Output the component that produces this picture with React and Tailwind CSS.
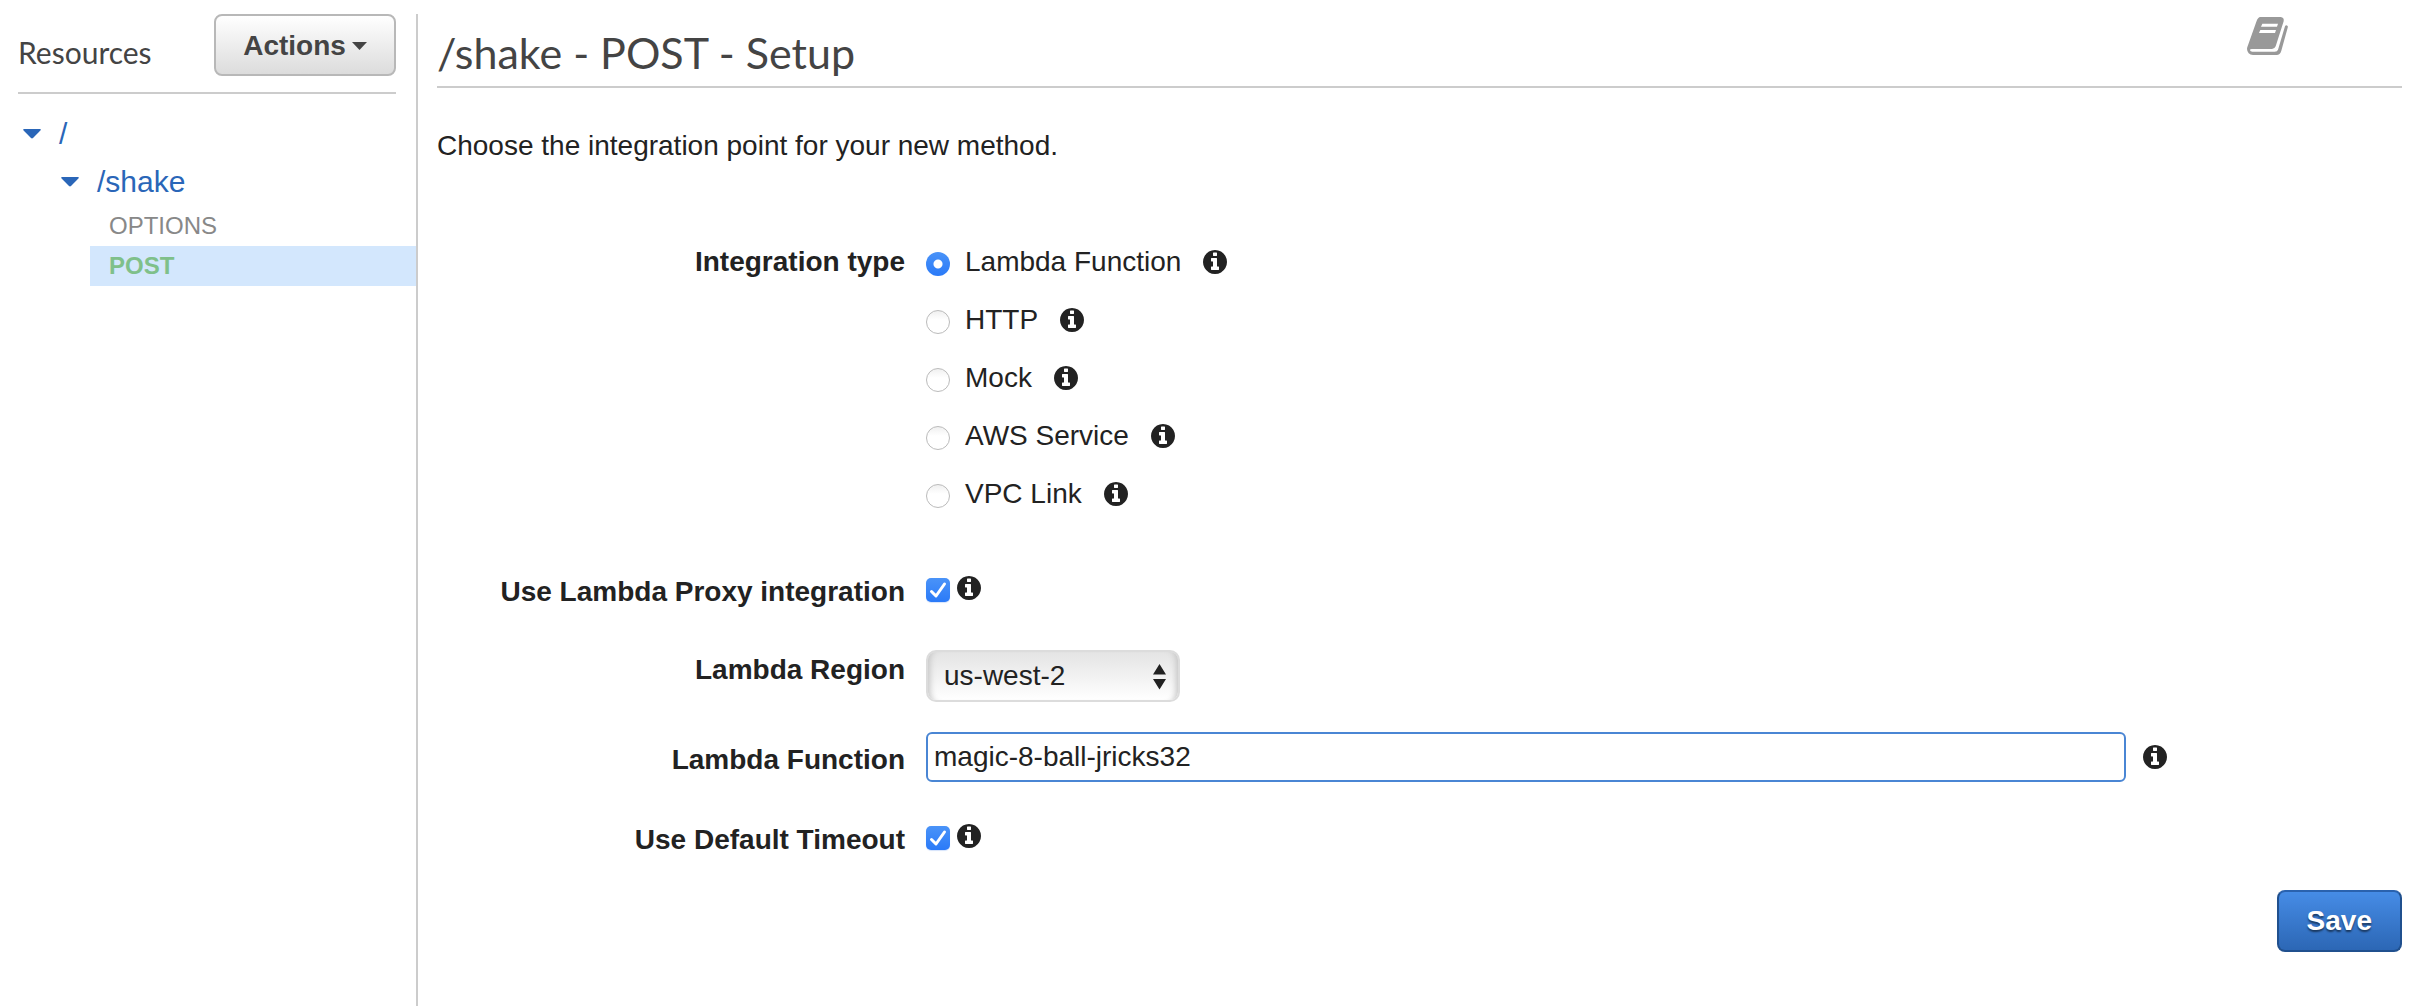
import { useState } from "react";

const INFO_PATH =
  "M1152 1376v-160q0-14-9-23t-23-9h-96v-512q0-14-9-23t-23-9h-320q-14 0-23 9t-9 23v160q0 14 9 23t23 9h96v320h-96q-14 0-23 9t-9 23v160q0 14 9 23t23 9h448q14 0 23-9t9-23zm-128-896v-160q0-14-9-23t-23-9h-192q-14 0-23 9t-9 23v160q0 14 9 23t23 9h192q14 0 23-9t9-23zm640 416q0 209-103 385.5t-279.5 279.5-385.5 103-385.5-103-279.5-279.5-103-385.5 103-385.5 279.5-279.5 385.5-103 385.5 103 279.5 279.5 103 385.5z";

const INTEGRATION_TYPES = ["Lambda Function", "HTTP", "Mock", "AWS Service", "VPC Link"];

function InfoButton({ about }) {
  return (
    <button type="button" aria-label={`About ${about}`} className="shrink-0 text-[#222]">
      <svg viewBox="128 128 1536 1536" className="block size-6" fill="currentColor" aria-hidden="true">
        <path d={INFO_PATH} />
      </svg>
    </button>
  );
}

function Caret() {
  return (
    <svg viewBox="0 0 18 10" className="h-2.5 w-[18px] shrink-0" fill="currentColor" aria-hidden="true">
      <path d="M1 0h16q1.400 .5 .4 1.600L10 9q-1 .9-2 0L.6 1.600Q-.4 .5 1 0z" />
    </svg>
  );
}

function BookIcon() {
  return (
    <svg viewBox="138 48 129 120" className="block h-10 w-[43px]" aria-hidden="true">
      <path
        fill="#999"
        d="M181 51h61q11 1 9 13l-24 75q-3 8-11 8h-60q-7 0-6 4 1 4 7 4h67q8 0 10-6l21-70q3-6 8-1 1 2 0 5l-19 69q-4 13-14 13h-71q-17-1-18-18 0-5 3-11l25-71q5-14 12-14z"
      />
      <path fill="#fff" d="M187 71h47l-3 9h-48zM181 90h47l-3 9h-48z" />
    </svg>
  );
}

function CheckBox({ id, checked, onChange }) {
  return (
    <span className="relative size-6 shrink-0">
      <input
        id={id}
        type="checkbox"
        checked={checked}
        onChange={onChange}
        className="peer block size-6 appearance-none rounded-[5px] border border-[#bbb] bg-white shadow-[0_1px_1px_#d5e3fb] checked:border-0 checked:bg-linear-to-b checked:from-[#4a93f8] checked:to-[#2a7af8]"
      />
      <svg
        viewBox="0 0 24 24"
        className="pointer-events-none absolute inset-0 hidden size-6 peer-checked:block"
        fill="none"
        stroke="#fff"
        strokeWidth="3"
        strokeLinecap="round"
        strokeLinejoin="round"
        aria-hidden="true"
      >
        <path d="M5.500 13.500l4.500 4.500L18.500 6" />
      </svg>
    </span>
  );
}

function Sidebar() {
  return (
    <aside className="mt-3.5 w-[418px] shrink-0 border-r-2 border-[#ccc]">
      <div className="mr-5 ml-[18px] flex items-start justify-between border-b-2 border-[#ccc] pb-4">
        <h2 className="mt-5 font-['Lato',sans-serif] text-[30px] leading-9 text-[#444]">Resources</h2>
        <button
          type="button"
          className="flex h-[62px] w-[182px] items-center justify-center gap-1.5 rounded-lg border-2 border-[#b8b8b8] bg-linear-to-b from-white to-[#dcdcdc] pt-0.5 font-bold text-[#444]"
        >
          Actions
          <svg viewBox="0 0 15 8" className="h-2 w-[15px]" fill="currentColor" aria-hidden="true">
            <path d="M0 0h15L7.500 8z" />
          </svg>
        </button>
      </div>
      <ul className="mt-6 text-[30px] leading-8 text-[#2a66b8]">
        <li>
          <a href="#root" className="ml-[23px] flex items-center gap-[18px]">
            <Caret />/
          </a>
          <ul className="mt-4">
            <li>
              <a href="#shake" className="ml-[61px] flex items-center gap-[18px]">
                <Caret />
                /shake
              </a>
              <ul className="mt-2 ml-[90px] text-2xl leading-10">
                <li>
                  <a href="#options" className="block pl-[19px] leading-10 text-[#888]">OPTIONS</a>
                </li>
                <li>
                  <a href="#post" className="block bg-[#d3e7fd] pl-[19px] leading-10 font-bold text-[#7fc08a]">POST</a>
                </li>
              </ul>
            </li>
          </ul>
        </li>
      </ul>
    </aside>
  );
}

export default function App() {
  const [type, setType] = useState("Lambda Function");
  const [proxy, setProxy] = useState(true);
  const [timeout, setTimeoutDefault] = useState(true);
  const [name, setName] = useState("magic-8-ball-jricks32");

  return (
    <div className="flex min-h-screen bg-white font-['Liberation_Sans',Arial,sans-serif] text-[28px] leading-8 text-[#222]">
      <Sidebar />
      <main className="mr-5 ml-[19px] min-w-0 flex-1 pt-3.5">
        <header className="flex items-start justify-between border-b-2 border-[#ccc] pb-[7px]">
          <h1 className="mt-[13px] font-['Lato',sans-serif] text-[43px] leading-[52px] text-[#444]">/shake - POST - Setup</h1>
          <button type="button" aria-label="Documentation" className="mt-0.5 mr-[113px]">
            <BookIcon />
          </button>
        </header>
        <p className="mt-[42px]">Choose the integration point for your new method.</p>

        <form onSubmit={(e) => e.preventDefault()} className="mt-[84px]">
          <div className="grid grid-cols-[468px_minmax(0,1fr)] gap-x-[21px]">
            <span id="type-label" className="text-right font-bold">Integration type</span>
            <div role="radiogroup" aria-labelledby="type-label" className="flex flex-col gap-[26px]">
              {INTEGRATION_TYPES.map((t) => (
                <div key={t} className="flex items-center">
                  <label className="mr-[22px] flex items-center gap-[15px]">
                    <input
                      type="radio"
                      name="integration-type"
                      checked={type === t}
                      onChange={() => setType(t)}
                      className="mt-1 size-6 shrink-0 appearance-none rounded-full border border-[#bbb] bg-linear-to-b from-[#f0f0f0] to-white to-40% checked:border-0 checked:bg-[radial-gradient(circle,#fff_4px,transparent_5px),linear-gradient(#4a93f8,#2a7af8)]"
                    />
                    {t}
                  </label>
                  <InfoButton about={t} />
                </div>
              ))}
            </div>

            <label htmlFor="proxy" className="mt-[66px] text-right font-bold">Use Lambda Proxy integration</label>
            <div className="mt-[66px] flex h-8 items-start gap-[7px]">
              <div className="pt-0.5">
                <CheckBox id="proxy" checked={proxy} onChange={() => setProxy(!proxy)} />
              </div>
              <InfoButton about="Lambda proxy integration" />
            </div>

            <label htmlFor="region" className="mt-[46px] text-right font-bold">Lambda Region</label>
            <div className="relative mt-[42px] w-[254px]">
              <select
                id="region"
                defaultValue="us-west-2"
                className="block h-[52px] w-full appearance-none rounded-[10px] border-2 border-[#dcdcdc] bg-linear-to-b from-[#e4e4e4] to-white pl-4 shadow-[inset_8px_0_6px_-6px_#c4c4c4,inset_-8px_0_6px_-6px_#c4c4c4]"
              >
                <option>us-west-2</option>
                <option>us-west-1</option>
                <option>us-east-1</option>
              </select>
              <svg
                viewBox="0 0 13 26"
                className="pointer-events-none absolute top-3.5 right-3.5 h-[26px] w-[13px]"
                fill="#222"
                aria-hidden="true"
              >
                <path d="M6.500 0L13 10.500H0zM0 15h13L6.500 25.500z" />
              </svg>
            </div>

            <label htmlFor="function" className="mt-[42px] text-right font-bold">Lambda Function</label>
            <div className="mt-[30px] flex items-center gap-[17px] pr-[235px]">
              <input
                id="function"
                type="text"
                value={name}
                onChange={(e) => setName(e.target.value)}
                className="h-[50px] min-w-0 flex-1 rounded-md border-2 border-[#4a86d4] bg-white px-1.5 outline-none"
              />
              <InfoButton about="the Lambda function" />
            </div>

            <label htmlFor="timeout" className="mt-[42px] text-right font-bold">Use Default Timeout</label>
            <div className="mt-[42px] flex h-8 items-start gap-[7px]">
              <div className="pt-0.5">
                <CheckBox id="timeout" checked={timeout} onChange={() => setTimeoutDefault(!timeout)} />
              </div>
              <InfoButton about="the default timeout" />
            </div>
          </div>

          <div className="mt-[34px] flex justify-end">
            <button
              type="submit"
              className="h-[62px] rounded-lg border-2 border-[#20508e] border-t-[#2a62ae] bg-linear-to-b from-[#468ce6] to-[#2c67b5] px-7 font-bold text-white text-shadow-[0_2px_2px_#0008]"
            >
              Save
            </button>
          </div>
        </form>
      </main>
    </div>
  );
}
